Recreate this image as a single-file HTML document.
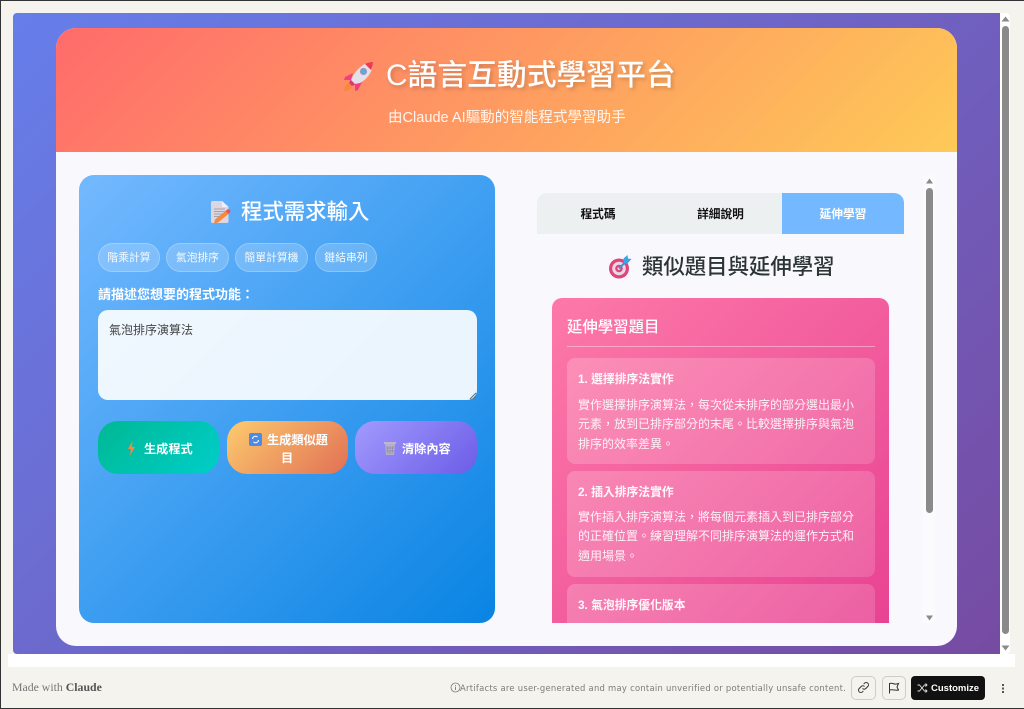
<!DOCTYPE html>
<html lang="zh-Hant"><head><meta charset="utf-8"><title>C語言互動式學習平台</title>
<style>
*{box-sizing:border-box;margin:0;padding:0}
html,body{width:1024px;height:709px;overflow:hidden;background:#f4f3ee}
body{position:relative;font-family:"Liberation Sans","Noto Sans CJK TC",sans-serif;filter:blur(.3px)}
.a{position:absolute}
.t{position:absolute;white-space:nowrap;line-height:1}
.c{text-align:center}
.chip{position:absolute;top:243px;height:29px;border-radius:15px;background:rgba(255,255,255,.2);border:1px solid rgba(255,255,255,.25);color:#fff;font-size:10.8px;line-height:29px;text-align:center;white-space:nowrap;opacity:.95}
.btn{position:absolute;top:421px;height:53px;border-radius:20px;color:#fff;font-weight:700;font-size:12.2px}
.item{position:absolute;left:567px;width:308px;border-radius:8px;background:linear-gradient(135deg,rgba(255,255,255,.2),rgba(255,255,255,.15))}
.it{position:absolute;left:11px;font-size:11.8px;font-weight:700;color:#fff;opacity:.95;white-space:nowrap;line-height:1}
.d{position:absolute;left:11px;font-size:12px;line-height:19.3px;color:#fff;opacity:.9;white-space:nowrap}
</style></head><body>
<!-- frame -->
<div class="a" style="left:8px;top:654px;width:1007px;height:13px;background:#fff"></div>
<div class="a" style="left:13px;top:13px;width:997px;height:641px;background:#fff;border-radius:4px"></div>
<div class="a" style="left:13px;top:13px;width:987px;height:641px;background:linear-gradient(135deg,#667eea,#764ba2);border-radius:4px 0 0 4px"></div>
<!-- outer scrollbar -->
<div class="a" style="left:1002px;top:26px;width:7px;height:608px;background:#8a8a8a;border-radius:4px"></div>
<svg class="a" style="left:1001px;top:15px" width="9" height="8"><path d="M4.500 1.500 8.500 6.500H.5z" fill="#8a8a8a"/></svg>
<svg class="a" style="left:1001px;top:644px" width="9" height="8"><path d="M.5 1.500H8.500L4.500 6.500z" fill="#8a8a8a"/></svg>
<!-- card -->
<div class="a" style="left:56px;top:28px;width:901px;height:618px;border-radius:20px;background:#f8f8fd;overflow:hidden">
<div class="a" style="left:0;top:0;width:901px;height:124px;background:linear-gradient(135deg,#ff6b6b,#feca57)"></div>
</div>
<!-- header -->
<svg class="a" style="left:342px;top:59px;overflow:visible" width="34" height="34" viewBox="0 0 34 34">
<path d="M7 24 10 27C9 31 5 32 2 32 2 29 3 25 7 24z" fill="#f58a3c"/>
<path d="M11 14 3 18 2 21 9 21z" fill="#f0417f"/>
<path d="M20 23 16 31 13 32 13 25z" fill="#f0417f"/>
<path d="M9 20 14 25 10 27 7 24z" fill="#d83a78"/>
<path d="M31 3C24 3 16 8 11 17L9 21 13 25 18 24C27 19 31 11 31 3z" fill="#e4dfe8"/>
<path d="M31 3C28 3 25 4 23 5L29 11C30 9 31 6 31 3z" fill="#f0384f"/>
<circle cx="21.500" cy="12.500" r="3.600" fill="#9a9ab0"/><circle cx="21.500" cy="12.500" r="2.600" fill="#5aa9ea"/>
</svg>
<div class="t" style="left:386px;top:61px;font-size:29.800px;font-weight:500;color:#fff;text-shadow:2px 2px 4px rgba(0,0,0,.2)">C語言互動式學習平台</div>
<div class="t" style="left:388px;top:111px;font-size:14.550px;color:#fff;opacity:.9">由Claude AI驅動的智能程式學習助手</div>
<!-- left panel -->
<div class="a" style="left:79px;top:175px;width:416px;height:448px;border-radius:15px;background:linear-gradient(135deg,#74b9ff,#0984e3)"></div>
<svg class="a" style="left:210px;top:200px" width="22" height="24" viewBox="0 0 22 24">
<path d="M1 2.500Q1 1 2.500 1H12l6.500 6v14.500Q18.500 23 17 23H2.500Q1 23 1 21.500z" fill="#dcd6e2"/>
<path d="M12 1l6.500 6h-6.500z" fill="#f2eef5"/>
<path d="M4 9h11M4 11.500h11M4 14h8M4 16.500h5" stroke="#a8a2b0" stroke-width="1"/>
<path d="M5 19.500 15.500 11l3 3L8 22.500l-4 1z" fill="#f58a3c"/><path d="M15.500 11l1.500-1.200a1.800 1.800 0 0 1 2.700 2.900L18.500 14z" fill="#f0505a"/>
</svg>
<div class="t" style="left:241px;top:202px;font-size:21.400px;font-weight:500;color:#fff">程式需求輸入</div>
<div class="chip" style="left:98px;width:62px">階乘計算</div>
<div class="chip" style="left:166px;width:63px">氣泡排序</div>
<div class="chip" style="left:235px;width:73px">簡單計算機</div>
<div class="chip" style="left:315px;width:62px">鏈結串列</div>
<div class="t" style="left:98px;top:288px;font-size:13px;font-weight:700;color:#fff">請描述您想要的程式功能：</div>
<div class="a" style="left:98px;top:310px;width:379px;height:90px;border-radius:10px;background:rgba(255,255,255,.9)"></div>
<div class="t" style="left:109px;top:324px;font-size:12px;color:#444">氣泡排序演算法</div>
<svg class="a" style="left:468px;top:391px" width="9" height="9"><path d="M8 2 2 8M8 5 5 8" stroke="#666" stroke-width="1"/></svg>
<div class="btn" style="left:98px;width:121px;background:linear-gradient(135deg,#00b894,#00cec9)"></div>
<div class="btn" style="left:227px;width:121px;background:linear-gradient(135deg,#fdcb6e,#e17055)"></div>
<div class="btn" style="left:355px;width:122px;background:linear-gradient(135deg,#a29bfe,#6c5ce7)"></div>
<svg class="a" style="left:127px;top:441px" width="9" height="15" viewBox="0 0 9 15"><path d="M5.500 0 1 8h3l-1 7 5-9H5z" fill="#f58a3c"/></svg>
<div class="t" style="left:144px;top:443px;font-size:12.200px;font-weight:700;color:#fff">生成程式</div>
<div class="a" style="left:249px;top:433px;width:13px;height:13px;border-radius:2px;background:#4a8be8"></div>
<svg class="a" style="left:249px;top:433px" width="13" height="13" viewBox="0 0 13 13"><path d="M3.500 6a3 3 0 0 1 5-2M9.500 7a3 3 0 0 1-5 2" fill="none" stroke="#fff" stroke-width="1"/></svg>
<div class="t" style="left:267px;top:434px;font-size:12.200px;font-weight:700;color:#fff">生成類似題</div>
<div class="t" style="left:281px;top:452px;font-size:12.200px;font-weight:700;color:#fff">目</div>
<svg class="a" style="left:384px;top:441px" width="12" height="15" viewBox="0 0 12 15"><path d="M0 1h12v2H0z" fill="#bdb8cf"/><path d="M1 3h10l-1 11H2z" fill="#b5b0c8"/><path d="M3 5l1 8M6 5v8M9 5l-1 8M2 7h8M2 10h8" stroke="#8f8aa8" stroke-width=".7"/></svg>
<div class="t" style="left:402px;top:443px;font-size:12.200px;font-weight:700;color:#fff">清除內容</div>
<!-- inner scrollbar -->
<div class="a" style="left:923px;top:175px;width:12px;height:448px;background:#fbfbfd"></div>
<div class="a" style="left:926px;top:188px;width:7px;height:325px;background:#8a8a8a;border-radius:4px"></div>
<svg class="a" style="left:925px;top:177px" width="9" height="8"><path d="M4.500 1.500 8 6.500H1z" fill="#8a8a8a"/></svg>
<svg class="a" style="left:925px;top:614px" width="9" height="8"><path d="M1 1.500H8L4.500 6.500z" fill="#8a8a8a"/></svg>
<!-- tabs -->
<div class="a" style="left:537px;top:193px;width:367px;height:41px;border-radius:10px 10px 0 0;background:#ecf0f1;overflow:hidden"><div class="a" style="left:245px;top:0;width:122px;height:41px;background:#74b9ff"></div></div>
<div class="t c" style="left:537px;width:122px;top:209px;font-size:11.700px;font-weight:700;color:#111">程式碼</div>
<div class="t c" style="left:659px;width:123px;top:209px;font-size:11.700px;font-weight:700;color:#111">詳細說明</div>
<div class="t c" style="left:782px;width:122px;top:209px;font-size:11.700px;font-weight:700;color:#fff">延伸學習</div>
<!-- right heading -->
<svg class="a" style="left:608px;top:255px" width="24" height="24" viewBox="0 0 24 24">
<circle cx="11" cy="13.500" r="10" fill="#e0447c"/><circle cx="11" cy="13.500" r="6.800" fill="#e8d8e2"/><circle cx="11" cy="13.500" r="3.800" fill="#e0447c"/><circle cx="11" cy="13.500" r="1.500" fill="#e8d8e2"/>
<path d="M11 13.500 19 5.500" stroke="#3d93d8" stroke-width="2"/><path d="M15.500 8V3.500L19.500 0l.5 3.500 3.500.5-4 4.500z" fill="#3fa3e8"/>
</svg>
<div class="t" style="left:642px;top:257px;font-size:21.400px;font-weight:500;color:#2d3436">類似題目與延伸學習</div>
<!-- pink panel -->
<div class="a" style="left:552px;top:298px;width:337px;height:325px;border-radius:10px 10px 0 0;background:linear-gradient(135deg,#fd79a8,#e84393)"></div>
<div class="t" style="left:567px;top:320px;font-size:15.400px;font-weight:500;color:#fff">延伸學習題目</div>
<div class="a" style="left:567px;top:346px;width:308px;height:1px;background:rgba(255,255,255,.4)"></div>
<div class="item" style="top:358px;height:106px">
<div class="it" style="top:16px">1. 選擇排序法實作</div>
<div class="d" style="top:38px">實作選擇排序演算法，每次從未排序的部分選出最小<br>元素，放到已排序部分的末尾。比較選擇排序與氣泡<br>排序的效率差異。</div>
</div>
<div class="item" style="top:471px;height:106px">
<div class="it" style="top:16px">2. 插入排序法實作</div>
<div class="d" style="top:37px">實作插入排序演算法，將每個元素插入到已排序部分<br>的正確位置。練習理解不同排序演算法的運作方式和<br>適用場景。</div>
</div>
<div class="item" style="top:584px;height:39px;border-radius:8px 8px 0 0">
<div class="it" style="top:16px">3. 氣泡排序優化版本</div>
</div>
<!-- footer -->
<div class="t" style="left:12px;top:682px;font-size:11.800px;font-family:'Liberation Serif','Noto Serif CJK SC',serif;color:#777"><span>Made with</span> <span style="color:#555;font-weight:700">Claude</span></div>
<svg class="a" style="left:450px;top:682px" width="11" height="11" viewBox="0 0 11 11"><circle cx="5.500" cy="5.500" r="4.500" fill="none" stroke="#777" stroke-width=".8"/><path d="M5.500 4.800v3.200M5.500 3v.9" stroke="#777" stroke-width=".9"/></svg>
<div class="t" style="left:460px;top:684px;font-size:9.200px;letter-spacing:.28px;color:#7d7c76;font-family:'DejaVu Sans','Liberation Sans',sans-serif;transform-origin:0 50%;transform:scaleX(.915)">Artifacts are user-generated and may contain unverified or potentially unsafe content.</div>
<div class="a" style="left:851px;top:676px;width:25px;height:24px;border:1px solid #cfcdc6;border-radius:5px"></div>
<svg class="a" style="left:857px;top:681px" width="13" height="13" viewBox="0 0 13 13"><path d="M5.500 7.500a2.300 2.300 0 0 0 3.300 0l2-2a2.300 2.300 0 0 0-3.300-3.300l-.8.800M7.500 5.500a2.300 2.300 0 0 0-3.300 0l-2 2a2.300 2.300 0 0 0 3.300 3.300l.8-.800" fill="none" stroke="#333" stroke-width="1"/></svg>
<div class="a" style="left:882px;top:676px;width:24px;height:24px;border:1px solid #cfcdc6;border-radius:5px"></div>
<svg class="a" style="left:888px;top:682px" width="12" height="12" viewBox="0 0 12 12"><path d="M1.500 11.500V1.500c3-1 4 1 6.500.5 1 0 2-.3 2.500-.5L9 5l1.500 3c-3 1-5-1-9 0" fill="none" stroke="#333" stroke-width="1"/></svg>
<div class="a" style="left:911px;top:676px;width:74px;height:24px;background:#111;border-radius:4px"></div>
<svg class="a" style="left:917px;top:683px" width="11" height="10" viewBox="0 0 11 10"><path d="M.500 2h2l5 6h2.500M.500 8h2l5-6h2.500M8.500.500 10 2 8.500 3.500M8.500 6.500 10 8 8.500 9.500" fill="none" stroke="#ddd" stroke-width=".9"/></svg>
<div class="t" style="left:931px;top:684px;font-size:9.500px;font-weight:700;color:#fff">Customize</div>
<div class="a" style="left:1002px;top:684px;width:2px;height:2px;background:#555;box-shadow:0 3.500px #555,0 7px #555"></div>
<!-- edge -->
<div class="a" style="left:0;top:0;width:1024px;height:1px;background:#333"></div>
<div class="a" style="left:0;top:708px;width:1024px;height:1px;background:#333"></div>
<div class="a" style="left:0;top:0;width:1px;height:709px;background:#333"></div>
</body></html>
